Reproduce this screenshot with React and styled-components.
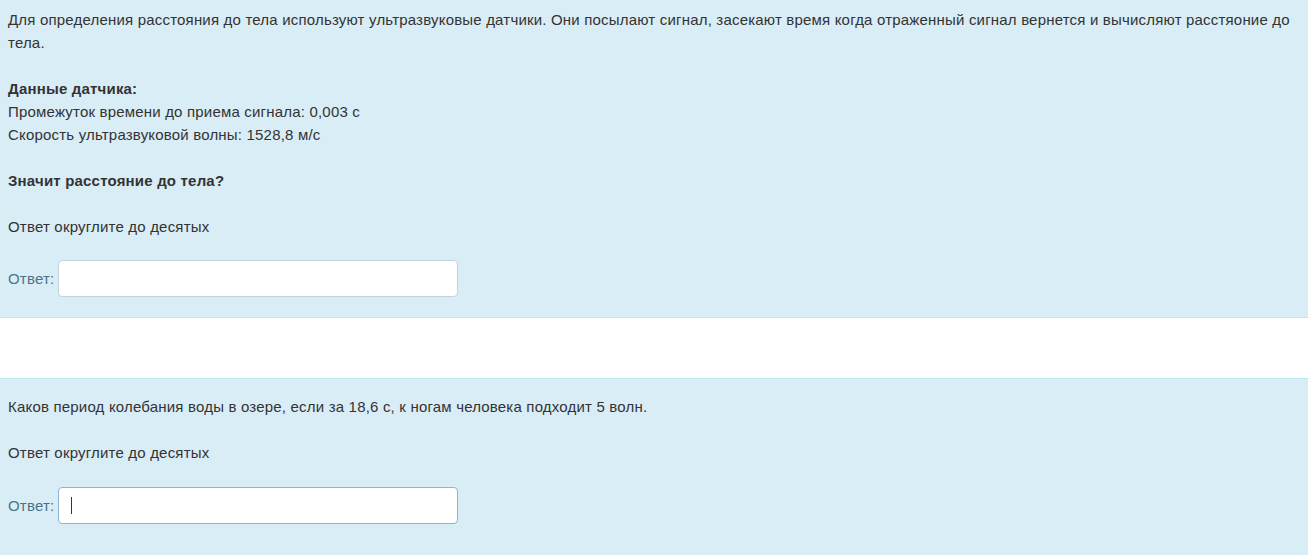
import React from "react";
import styled, { createGlobalStyle } from "styled-components";

const Global = createGlobalStyle`
  html, body { margin: 0; padding: 0; background: #fff; }
  body {
    font-family: "Liberation Sans", Arial, sans-serif;
    font-size: 15px;
    letter-spacing: 0.19px;
    color: #333;
  }
`;

const Page = styled.div`
  display: flex;
  flex-direction: column;
  gap: 60px;
`;

const Formulation = styled.div`
  background: #d9edf7;
  border-top: ${(p) => (p.$topBorder ? "1px solid #bce8f1" : "none")};
  border-bottom: 1px solid #bce8f1;
  padding: ${(p) => p.$pad};
  padding-left: 8px;
  padding-right: 10px;
`;

const Para = styled.p`
  margin: 0 0 ${(p) => (p.$last ? "22px" : "23px")} 0;
  line-height: 23px;
`;

const Line = styled.div`
  line-height: 23px;
  font-weight: ${(p) => (p.$bold ? "bold" : "normal")};
`;

const AnswerRow = styled.div`
  display: flex;
  align-items: center;
  gap: 4px;
`;

const Label = styled.label`
  color: #4a7387;
  font-size: 15px;
`;

const Input = styled.div`
  box-sizing: border-box;
  width: 400px;
  height: 37px;
  background: #fff;
  border: 1px solid ${(p) => (p.$focused ? "#8eb4d4" : "#c3d3dd")};
  border-radius: 4px;
  display: flex;
  align-items: center;
  padding-left: 12px;
`;

const Caret = styled.span`
  display: block;
  width: 1px;
  height: 17px;
  background: #333;
`;

export default function App() {
  return (
    <>
      <Global />
      <Page>
        <Formulation $pad="8px 8px 20px">
          <Para>
            Для определения расстояния до тела используют ультразвуковые датчики. Они посылают сигнал,
            засекают время когда отраженный сигнал вернется и вычисляют расстяоние до тела.
          </Para>
          <Para as="div">
            <Line $bold>Данные датчика:</Line>
            <Line>Промежуток времени до приема сигнала: 0,003 с</Line>
            <Line>Скорость ультразвуковой волны: 1528,8 м/с</Line>
          </Para>
          <Para>
            <b>Значит расстояние до тела?</b>
          </Para>
          <Para $last>Ответ округлите до десятых</Para>
          <AnswerRow>
            <Label>Ответ:</Label>
            <Input />
          </AnswerRow>
        </Formulation>
        <Formulation $topBorder $pad="16px 8px 40px">
          <Para>Каков период колебания воды в озере, если за 18,6 с, к ногам человека подходит 5 волн.</Para>
          <Para>Ответ округлите до десятых</Para>
          <AnswerRow>
            <Label>Ответ:</Label>
            <Input $focused>
              <Caret />
            </Input>
          </AnswerRow>
        </Formulation>
      </Page>
    </>
  );
}
